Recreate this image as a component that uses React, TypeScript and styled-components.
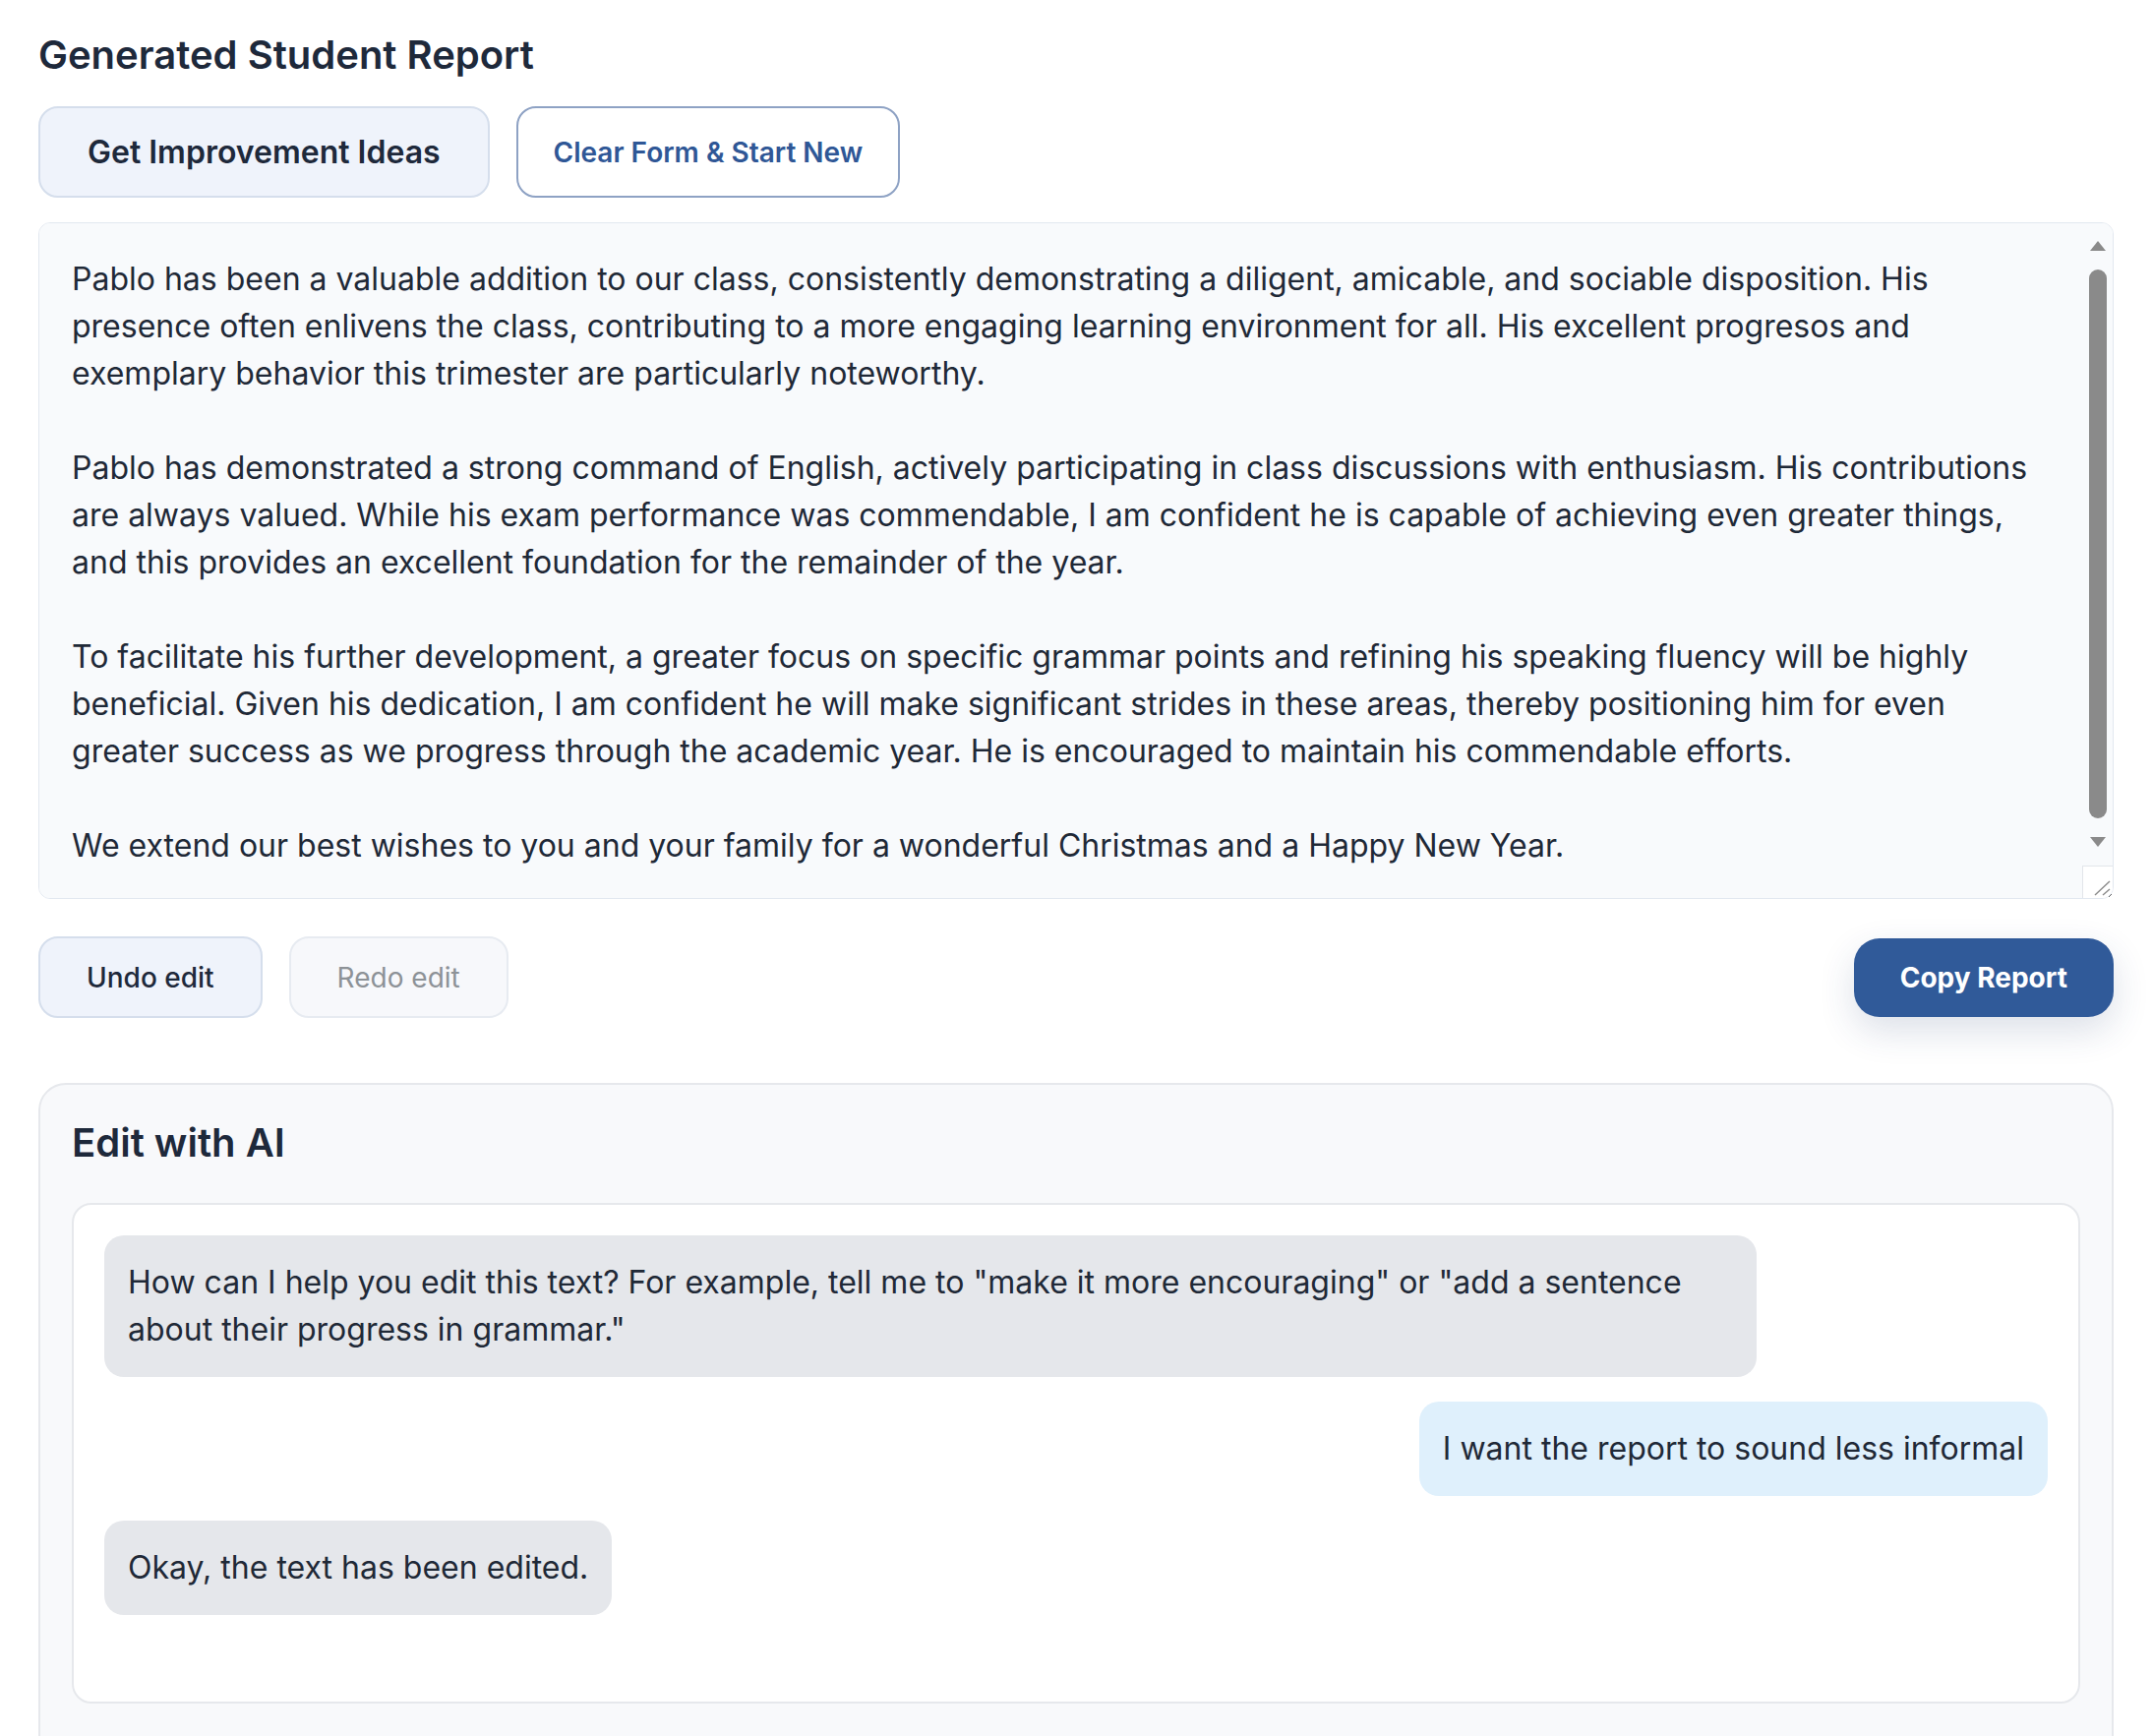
import React from "react";
import styled, { createGlobalStyle } from "styled-components";

const GlobalStyle = createGlobalStyle`
  html, body { margin: 0; padding: 0; background: #ffffff; }
  body { font-family: Inter, "Noto Sans", "Liberation Sans", sans-serif; color: #1f2937; }
  * { box-sizing: border-box; }
`;

const Page = styled.div`
  padding: 32px 39px 40px 39px;
  display: flex;
  flex-direction: column;
`;

const Title = styled.h2`
  margin: 0;
  font-size: 40px;
  line-height: 48px;
  font-weight: 600;
  color: #1e293b;
`;

const TopActions = styled.div`
  display: flex;
  gap: 27px;
  margin-top: 28px;
`;

const PillButton = styled.button<{ $variant: "soft" | "outline"; $size: number; $px: number }>`
  height: 93px;
  padding: 0 ${(p) => p.$px}px;
  border-radius: 20px;
  font-family: inherit;
  font-size: ${(p) => p.$size}px;
  font-weight: 600;
  cursor: pointer;
  border: 2px solid ${(p) => (p.$variant === "soft" ? "#d5deec" : "#8ea2c4")};
  background: ${(p) => (p.$variant === "soft" ? "#eff3fb" : "#ffffff")};
  color: ${(p) => (p.$variant === "soft" ? "#1e293b" : "#2f5796")};
`;

const ReportWrap = styled.div`
  position: relative;
  margin-top: 25px;
`;

const ReportArea = styled.textarea`
  display: block;
  width: 100%;
  height: 688px;
  padding: 33px 58px 38px 33px;
  border: 1px solid #e2e8f0;
  border-radius: 12px;
  background: #f8fafc;
  color: #1f2937;
  font-family: inherit;
  font-size: 32px;
  line-height: 48px;
  outline: none;
  resize: vertical;
  overflow-y: auto;
  scrollbar-width: none;
  &::-webkit-scrollbar { display: none; }
`;

const ScrollRail = styled.div`
  position: absolute;
  top: 19px;
  bottom: 53px;
  right: 7px;
  width: 18px;
  display: flex;
  flex-direction: column;
  align-items: center;
  gap: 19px;
  pointer-events: none;
`;

const Arrow = styled.div<{ $down?: boolean }>`
  width: 0;
  height: 0;
  border-left: 8px solid transparent;
  border-right: 8px solid transparent;
  ${(p) => (p.$down ? "border-top: 10px solid #8a8a8a;" : "border-bottom: 10px solid #8a8a8a;")}
`;

const Thumb = styled.div`
  flex: 1;
  width: 18px;
  border-radius: 9px;
  background: #8a8a8a;
`;

const ResizeCorner = styled.div`
  position: absolute;
  right: 1px;
  bottom: 1px;
  width: 31px;
  height: 33px;
  border-left: 1px solid #e3e6ea;
  border-top: 1px solid #e3e6ea;
  border-bottom-right-radius: 11px;
  background: #ffffff;
  pointer-events: none;
`;

const EditRow = styled.div`
  display: flex;
  align-items: center;
  gap: 27px;
  margin-top: 38px;
`;

const SmallButton = styled.button<{ $disabled?: boolean }>`
  height: 83px;
  padding: 0 47px;
  border-radius: 20px;
  font-family: inherit;
  font-size: 28px;
  font-weight: ${(p) => (p.$disabled ? 400 : 500)};
  border: 2px solid ${(p) => (p.$disabled ? "#e7ebf1" : "#d5deec")};
  background: ${(p) => (p.$disabled ? "#f7f8fb" : "#eff3fb")};
  color: ${(p) => (p.$disabled ? "#8d9297" : "#1e293b")};
`;

const Spacer = styled.div`
  flex: 1;
`;

const CopyButton = styled.button`
  height: 80px;
  padding: 0 47px;
  border: none;
  border-radius: 26px;
  background: #305a99;
  color: #ffffff;
  font-family: inherit;
  font-size: 28px;
  font-weight: 700;
  box-shadow: 0 14px 36px rgba(40, 60, 110, 0.16);
`;

const AiCard = styled.section`
  margin-top: 66px;
  border: 2px solid #e6e8ec;
  border-radius: 28px;
  background: #f8f9fb;
  padding: 35px 32px 60px 32px;
`;

const CardTitle = styled.h3`
  margin: 0;
  font-size: 40px;
  line-height: 48px;
  font-weight: 600;
  color: #1e293b;
`;

const ChatBox = styled.div`
  margin-top: 37px;
  height: 509px;
  border: 2px solid #e6e8ec;
  border-radius: 20px;
  background: #ffffff;
  padding: 31px;
  display: flex;
  flex-direction: column;
  gap: 25px;
  overflow-y: auto;
`;

const Bubble = styled.div<{ $user?: boolean }>`
  align-self: ${(p) => (p.$user ? "flex-end" : "flex-start")};
  max-width: 85%;
  padding: 24px 24px;
  border-radius: 20px;
  background: ${(p) => (p.$user ? "#dff0fc" : "#e5e7eb")};
  color: #1f2937;
  font-size: 32px;
  line-height: 48px;
`;

const InputRow = styled.div`
  margin-top: 30px;
  height: 80px;
`;

const reportText = `Pablo has been a valuable addition to our class, consistently demonstrating a diligent, amicable, and sociable disposition. His presence often enlivens the class, contributing to a more engaging learning environment for all. His excellent progresos and exemplary behavior this trimester are particularly noteworthy.

Pablo has demonstrated a strong command of English, actively participating in class discussions with enthusiasm. His contributions are always valued. While his exam performance was commendable, I am confident he is capable of achieving even greater things, and this provides an excellent foundation for the remainder of the year.

To facilitate his further development, a greater focus on specific grammar points and refining his speaking fluency will be highly beneficial. Given his dedication, I am confident he will make significant strides in these areas, thereby positioning him for even greater success as we progress through the academic year. He is encouraged to maintain his commendable efforts.

We extend our best wishes to you and your family for a wonderful Christmas and a Happy New Year.`;

export default function App() {
  return (
    <>
      <GlobalStyle />
      <Page>
        <Title>Generated Student Report</Title>
        <TopActions>
          <PillButton $variant="soft" $size={32} $px={48}>
            Get Improvement Ideas
          </PillButton>
          <PillButton $variant="outline" $size={28} $px={36}>
            Clear Form &amp; Start New
          </PillButton>
        </TopActions>
        <ReportWrap>
          <ReportArea defaultValue={reportText} spellCheck={false} />
          <ScrollRail aria-hidden>
            <Arrow />
            <Thumb />
            <Arrow $down />
          </ScrollRail>
          <ResizeCorner aria-hidden>
            <svg width="30" height="32" viewBox="0 0 30 32">
              <path d="M12 29 L27 15 M20 29 L27 23" stroke="#8a8a8a" strokeWidth="1.4" fill="none" />
            </svg>
          </ResizeCorner>
        </ReportWrap>
        <EditRow>
          <SmallButton>Undo edit</SmallButton>
          <SmallButton $disabled>Redo edit</SmallButton>
          <Spacer />
          <CopyButton>Copy Report</CopyButton>
        </EditRow>
        <AiCard>
          <CardTitle>Edit with AI</CardTitle>
          <ChatBox>
            <Bubble>
              How can I help you edit this text? For example, tell me to "make it more encouraging" or "add a
              sentence about their progress in grammar."
            </Bubble>
            <Bubble $user>I want the report to sound less informal</Bubble>
            <Bubble>Okay, the text has been edited.</Bubble>
          </ChatBox>
          <InputRow />
        </AiCard>
      </Page>
    </>
  );
}
